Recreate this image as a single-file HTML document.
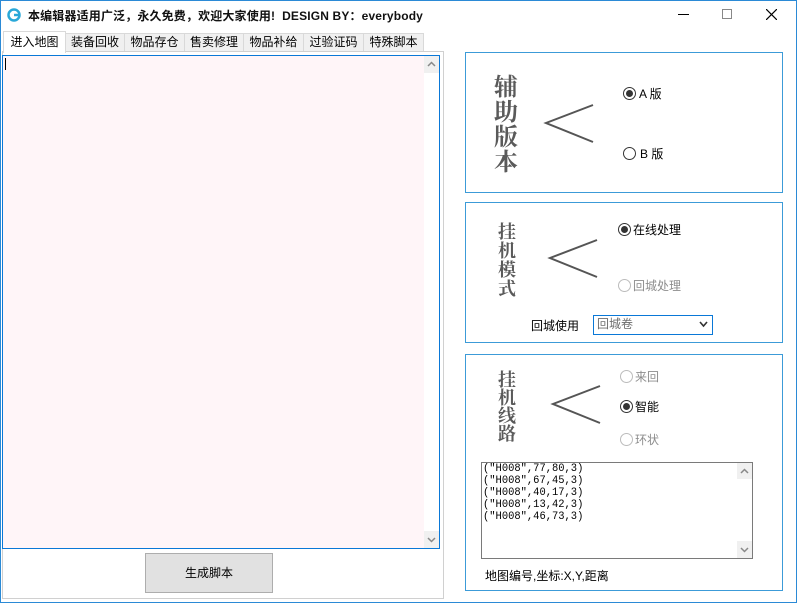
<!DOCTYPE html>
<html><head><meta charset="utf-8"><style>
*{margin:0;padding:0;box-sizing:border-box}
body{width:797px;height:603px;position:relative;background:#fff;font-family:"Liberation Sans","Noto Sans CJK SC",sans-serif;font-size:12px;color:#000;overflow:hidden}
.a{position:absolute}
.tab{position:absolute;top:33px;height:18px;border:1px solid #d9d9d9;border-bottom:none;background:#f0f0f0;text-align:center;line-height:16px;font-size:12px}
.grp{position:absolute;border:1px solid #3c9bd8}
.big{position:absolute;font-family:"Noto Serif CJK SC",serif;font-weight:bold;color:#5a5a5a;text-align:center}
.r{position:absolute;width:13px;height:13px;border:1px solid #333;border-radius:50%;background:#fff}
.r.on::after{content:"";position:absolute;left:2px;top:2px;width:7px;height:7px;border-radius:50%;background:#333}
.r.dis{border-color:#bcbcbc}
.lab{position:absolute;font-size:12px;line-height:14px}
.dis-t{color:#8d8d8d}
.sb{position:absolute;width:15px;background:#f0f0f0}
</style></head><body>
<div class="a" style="left:0;top:0;width:797px;height:603px;border:1px solid #2b8ad6;border-top:none"></div>
<div class="a" style="left:0;top:0;width:797px;height:1px;background:#2b8ad6"></div>
<svg class="a" style="left:7px;top:8px" width="14" height="14" viewBox="0 0 14 14"><circle cx="7" cy="7" r="5.5" fill="none" stroke="#2aa8d8" stroke-width="2.5"/><path d="M7 7h5" stroke="#2aa8d8" stroke-width="2.5"/></svg>
<div class="a" style="left:28px;top:7px;font-size:12px;font-weight:bold;color:#111;white-space:nowrap;transform:scaleX(1.0);letter-spacing:0.15px">本编辑器适用广泛，永久免费，欢迎大家使用!&nbsp;&nbsp;DESIGN BY：everybody</div>
<div class="a" style="left:678px;top:14px;width:11px;height:1px;background:#000"></div>
<div class="a" style="left:722px;top:9px;width:10px;height:10px;border:1px solid #888"></div>
<svg class="a" style="left:766px;top:9px" width="11" height="11"><path d="M0 0L11 11M11 0L0 11" stroke="#000" stroke-width="1.2"/></svg>

<div class="a" style="left:2px;top:51px;width:442px;height:548px;border:1px solid #d0d0d0"></div>
<div class="tab" style="left:65px;width:60px">装备回收</div>
<div class="tab" style="left:124px;width:61px">物品存仓</div>
<div class="tab" style="left:184px;width:60px">售卖修理</div>
<div class="tab" style="left:243px;width:61px">物品补给</div>
<div class="tab" style="left:303px;width:61px">过验证码</div>
<div class="tab" style="left:363px;width:61px">特殊脚本</div>
<div class="tab" style="left:3px;top:31px;width:63px;height:22px;background:#fff;z-index:2;line-height:20px">进入地图</div>
<div class="a" style="left:2px;top:55px;width:438px;height:494px;border:1px solid #0a78d7;background:#fff5f8"></div>
<div class="a" style="left:5px;top:58px;width:1px;height:12px;background:#000"></div>
<div class="a" style="left:424px;top:56px;width:15px;height:492px;background:#fff"></div>
<div class="sb" style="left:424px;top:56px;height:17px"><svg width="15" height="17"><path d="M4 10L7.5 6.5L11 10" fill="none" stroke="#888" stroke-width="1.5"/></svg></div>
<div class="sb" style="left:424px;top:531px;height:17px"><svg width="15" height="17"><path d="M4 7L7.5 10.5L11 7" fill="none" stroke="#888" stroke-width="1.5"/></svg></div>
<div class="a" style="left:145px;top:553px;width:128px;height:40px;border:1px solid #adadad;background:#e1e1e1;text-align:center;line-height:38px;font-size:12px">生成脚本</div>

<div class="grp" style="left:465px;top:52px;width:318px;height:141px"></div>
<div class="big" style="left:490px;top:72px;width:32px;font-size:24px;line-height:25px">辅<br>助<br>版<br>本</div>
<svg class="a" style="left:540px;top:100px" width="60" height="50"><path d="M53 5L6 23L53 42" fill="none" stroke="#555" stroke-width="2"/></svg>
<div class="r on" style="left:623px;top:87px"></div><div class="lab" style="left:639px;top:87px">A 版</div>
<div class="r" style="left:623px;top:147px"></div><div class="lab" style="left:640px;top:147px">B 版</div>

<div class="grp" style="left:465px;top:202px;width:318px;height:141px"></div>
<div class="big" style="left:495px;top:222px;width:24px;font-size:18px;line-height:19px">挂<br>机<br>模<br>式</div>
<svg class="a" style="left:545px;top:235px" width="60" height="48"><path d="M52 5L5 23L52 42" fill="none" stroke="#555" stroke-width="2"/></svg>
<div class="r on" style="left:618px;top:223px"></div><div class="lab" style="left:633px;top:223px">在线处理</div>
<div class="r dis" style="left:618px;top:279px"></div><div class="lab dis-t" style="left:633px;top:279px">回城处理</div>
<div class="lab" style="left:531px;top:319px">回城使用</div>
<div class="a" style="left:593px;top:315px;width:120px;height:20px;border:1px solid #0a78d7;color:#6d6d6d;padding-left:3px;line-height:17px">回城卷</div>
<svg class="a" style="left:699px;top:321px" width="9" height="7"><path d="M1 1L4.5 5L8 1" fill="none" stroke="#333" stroke-width="1.6"/></svg>

<div class="grp" style="left:465px;top:354px;width:318px;height:237px"></div>
<div class="big" style="left:495px;top:370px;width:24px;font-size:18px;line-height:18px">挂<br>机<br>线<br>路</div>
<svg class="a" style="left:548px;top:382px" width="60" height="48"><path d="M52 4L5 22L52 41" fill="none" stroke="#555" stroke-width="2"/></svg>
<div class="r dis" style="left:620px;top:370px"></div><div class="lab dis-t" style="left:635px;top:370px">来回</div>
<div class="r on" style="left:620px;top:400px"></div><div class="lab" style="left:635px;top:400px">智能</div>
<div class="r dis" style="left:620px;top:433px"></div><div class="lab dis-t" style="left:635px;top:433px">环状</div>
<div class="a" style="left:481px;top:462px;width:272px;height:97px;border:1px solid #7a7a7a;background:#fff"></div>
<div class="a" style="left:483px;top:463px;font-family:'Liberation Mono',monospace;font-size:11px;line-height:12px;transform:scaleX(0.95);transform-origin:left">("H008",77,80,3)<br>("H008",67,45,3)<br>("H008",40,17,3)<br>("H008",13,42,3)<br>("H008",46,73,3)</div>
<div class="sb" style="left:737px;top:463px;height:16px"><svg width="15" height="16"><path d="M4 10L7.5 6.5L11 10" fill="none" stroke="#888" stroke-width="1.5"/></svg></div>
<div class="sb" style="left:737px;top:541px;height:17px"><svg width="15" height="17"><path d="M4 7L7.5 10.5L11 7" fill="none" stroke="#888" stroke-width="1.5"/></svg></div>
<div class="lab" style="left:485px;top:569px">地图编号,坐标:X,Y,距离</div>
</body></html>
